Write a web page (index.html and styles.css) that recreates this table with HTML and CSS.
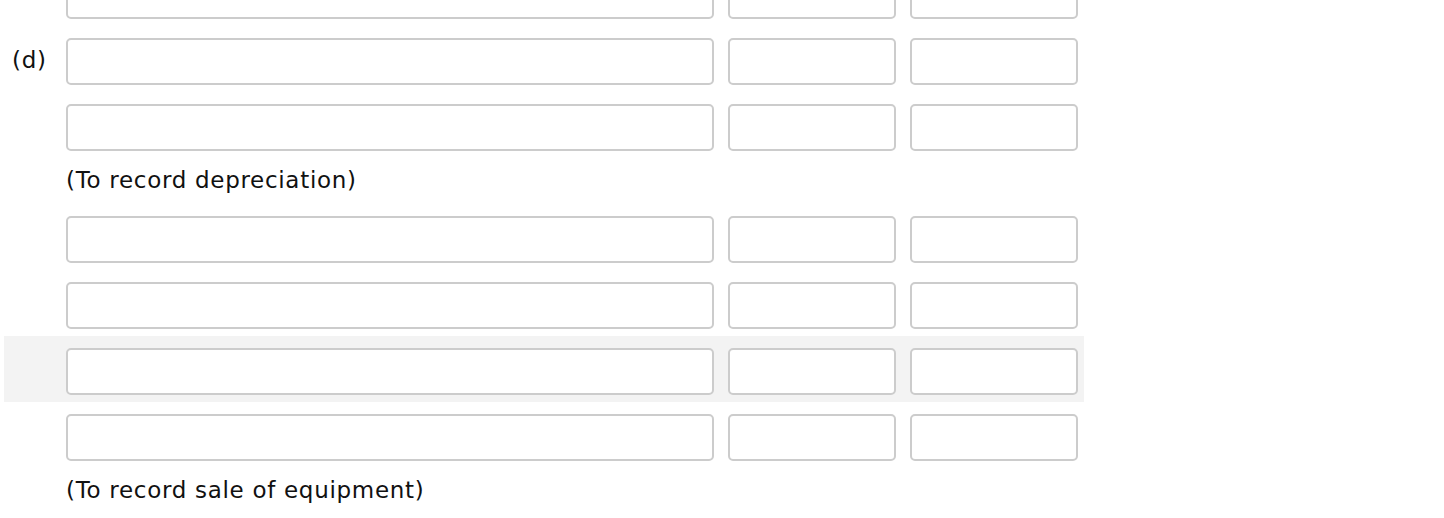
FILE: index.html
```html
<!DOCTYPE html>
<html>
<head>
<meta charset="utf-8">
<link rel="stylesheet" href="styles.css">
</head>
<body>
<div class="journal">
  <div class="row">
    <span class="label"></span>
    <input class="field account" type="text">
    <input class="field amount" type="text">
    <input class="field amount" type="text">
  </div>
  <div class="row">
    <span class="label">(d)</span>
    <input class="field account" type="text">
    <input class="field amount" type="text">
    <input class="field amount" type="text">
  </div>
  <div class="row">
    <span class="label"></span>
    <input class="field account" type="text">
    <input class="field amount" type="text">
    <input class="field amount" type="text">
  </div>
  <div class="note">(To record depreciation)</div>
  <div class="row">
    <span class="label"></span>
    <input class="field account" type="text">
    <input class="field amount" type="text">
    <input class="field amount" type="text">
  </div>
  <div class="row">
    <span class="label"></span>
    <input class="field account" type="text">
    <input class="field amount" type="text">
    <input class="field amount" type="text">
  </div>
  <div class="row row-hover">
    <span class="label"></span>
    <input class="field account" type="text">
    <input class="field amount" type="text">
    <input class="field amount" type="text">
  </div>
  <div class="row">
    <span class="label"></span>
    <input class="field account" type="text">
    <input class="field amount" type="text">
    <input class="field amount" type="text">
  </div>
  <div class="note">(To record sale of equipment)</div>
</div>
</body>
</html>
```
FILE: styles.css
```css
html, body {
  margin: 0;
  padding: 0;
  background: #ffffff;
}

body {
  font-family: "DejaVu Sans", Verdana, sans-serif;
  color: #111111;
  overflow: hidden;
}

.journal {
  margin-top: -40px;
  margin-left: 4px;
  width: 1080px;
}

.row {
  display: grid;
  grid-template-columns: 48px 648px 168px 168px;
  column-gap: 14px;
  padding: 12px 6px 7px 0;
  height: 66px;
  box-sizing: border-box;
  align-items: start;
}

.row-hover {
  background: #f3f3f3;
}

.label {
  padding-left: 8px;
  padding-top: 9px;
  font-size: 23px;
  line-height: 26px;
  letter-spacing: 0.7px;
  white-space: nowrap;
}

.field {
  box-sizing: border-box;
  height: 47px;
  margin: 0;
  border: 2px solid #cccccc;
  border-radius: 5px;
  background: #ffffff;
  font: inherit;
  padding: 0 8px;
  outline: none;
}

.note {
  height: 46px;
  box-sizing: border-box;
  padding: 9px 0 0 62px;
  font-size: 23px;
  line-height: 26px;
  letter-spacing: 0.7px;
}
```
